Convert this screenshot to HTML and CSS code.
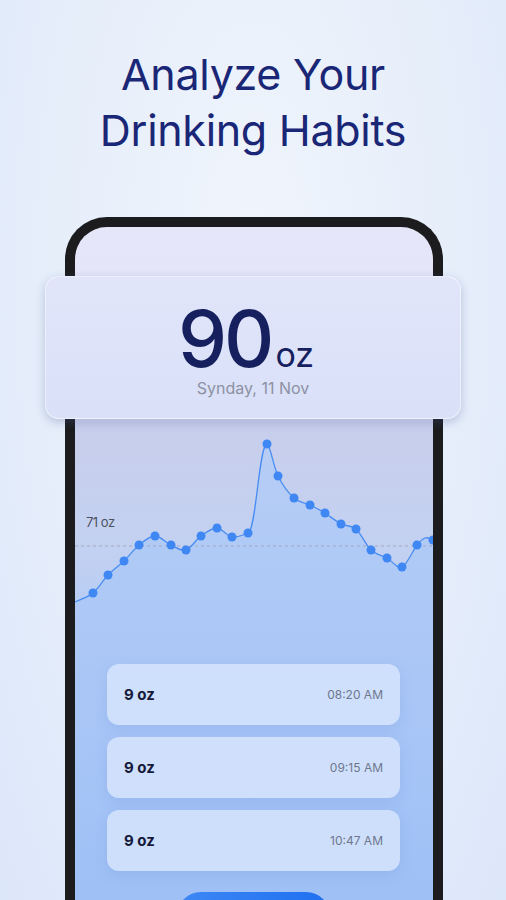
FILE: index.html
```html
<!DOCTYPE html>
<html lang="en">
<head>
    <meta charset="UTF-8">
    <meta name="viewport" content="width=device-width, initial-scale=1.0">
    <title>Analyze Your Drinking Habits</title>
    <link rel="stylesheet" href="styles.css">
</head>
<body>
    <h1 class="title">Analyze Your<br>Drinking Habits</h1>

    <div class="phone">
        <div class="screen-top"></div>

        <div class="total-card">
            <div class="total">
                <span class="total-value">90</span><span class="total-unit">oz</span>
            </div>
            <div class="total-date">Synday, 11 Nov</div>
        </div>

        <svg class="chart" width="358" height="235" viewBox="0 0 358 235">
            <defs>
                <linearGradient id="areaFill" x1="0" y1="0" x2="0" y2="1">
                    <stop offset="0" stop-color="#b7cdf5"/>
                    <stop offset="0.5" stop-color="#b0caf6"/>
                    <stop offset="1" stop-color="#abc7f6"/>
                </linearGradient>
            </defs>
            <path class="area" fill="url(#areaFill)" d="M0,183 C6,180 12.5,178.5 18,174 C23.5,169.5 27.8,161.3 33,156 C38.2,150.7 43.8,147 49,142 C54.2,137 58.8,130.2 64,126 C69.2,121.8 74.7,117 80,117 C85.3,117 90.8,123.7 96,126 C101.2,128.3 106,132.5 111,131 C116,129.5 120.8,120.7 126,117 C131.2,113.3 136.8,108.8 142,109 C147.2,109.2 151.8,117.2 157,118 C162.2,118.8 168,116 173,114 C181,113 184,25 192,25 C195,25 198.5,48 203,57 C207.5,66 213.7,74.2 219,79 C224.3,83.8 229.8,83.5 235,86 C240.2,88.5 244.8,90.8 250,94 C255.2,97.2 260.8,102.3 266,105 C271.2,107.7 276,105.7 281,110 C286,114.3 290.8,126.2 296,131 C301.2,135.8 306.8,136.2 312,139 C317.2,141.8 322,150.2 327,148 C332,145.8 338.2,130.8 342,126 C345.8,121.2 347.3,120 350,119 C352.7,118 356,120 358,120 L358,235 L0,235 Z"/>
            <line class="avg-line" x1="0" y1="127" x2="358" y2="127"/>
            <text class="avg-label" x="11" y="108">71 oz</text>
            <path class="line" d="M0,183 C6,180 12.5,178.5 18,174 C23.5,169.5 27.8,161.3 33,156 C38.2,150.7 43.8,147 49,142 C54.2,137 58.8,130.2 64,126 C69.2,121.8 74.7,117 80,117 C85.3,117 90.8,123.7 96,126 C101.2,128.3 106,132.5 111,131 C116,129.5 120.8,120.7 126,117 C131.2,113.3 136.8,108.8 142,109 C147.2,109.2 151.8,117.2 157,118 C162.2,118.8 168,116 173,114 C181,113 184,25 192,25 C195,25 198.5,48 203,57 C207.5,66 213.7,74.2 219,79 C224.3,83.8 229.8,83.5 235,86 C240.2,88.5 244.8,90.8 250,94 C255.2,97.2 260.8,102.3 266,105 C271.2,107.7 276,105.7 281,110 C286,114.3 290.8,126.2 296,131 C301.2,135.8 306.8,136.2 312,139 C317.2,141.8 322,150.2 327,148 C332,145.8 338.2,130.8 342,126 C345.8,121.2 347.3,120 350,119 C352.7,118 356,120 358,120"/>
            <g class="dots">
                <circle cx="18" cy="174" r="4.5"/>
                <circle cx="33" cy="156" r="4.5"/>
                <circle cx="49" cy="142" r="4.5"/>
                <circle cx="64" cy="126" r="4.5"/>
                <circle cx="80" cy="117" r="4.5"/>
                <circle cx="96" cy="126" r="4.5"/>
                <circle cx="111" cy="131" r="4.5"/>
                <circle cx="126" cy="117" r="4.5"/>
                <circle cx="142" cy="109" r="4.5"/>
                <circle cx="157" cy="118" r="4.5"/>
                <circle cx="173" cy="114" r="4.5"/>
                <circle cx="192" cy="25" r="4.5"/>
                <circle cx="203" cy="57" r="4.5"/>
                <circle cx="219" cy="79" r="4.5"/>
                <circle cx="235" cy="86" r="4.5"/>
                <circle cx="250" cy="94" r="4.5"/>
                <circle cx="266" cy="105" r="4.5"/>
                <circle cx="281" cy="110" r="4.5"/>
                <circle cx="296" cy="131" r="4.5"/>
                <circle cx="312" cy="139" r="4.5"/>
                <circle cx="327" cy="148" r="4.5"/>
                <circle cx="342" cy="126" r="4.5"/>
                <circle cx="358" cy="121" r="4.5"/>
            </g>
        </svg>

        <div class="entries">
            <div class="entry">
                <span class="entry-amount">9 oz</span>
                <span class="entry-time">08:20 AM</span>
            </div>
            <div class="entry">
                <span class="entry-amount">9 oz</span>
                <span class="entry-time">09:15 AM</span>
            </div>
            <div class="entry">
                <span class="entry-amount">9 oz</span>
                <span class="entry-time">10:47 AM</span>
            </div>
        </div>

        <div class="add-btn"></div>
    </div>
</body>
</html>
```

FILE: styles.css
```css
body {
    margin: 0;
    width: 506px;
    height: 900px;
    overflow: hidden;
    font-family: Inter, "Noto Sans", sans-serif;
    background: radial-gradient(ellipse at 50% 30%, #f0f5fc 0%, #e6eefa 55%, #dde7fa 100%);
}
.title {
    margin: 46px 0 0;
    text-align: center;
    font-size: 43px;
    line-height: 56px;
    font-weight: 400;
    color: #1a2676;
    letter-spacing: -0.3px;
}
.phone {
    width: 358px;
    height: 700px;
    margin: 59px 0 0 65px;
    border: 10px solid #1c1c1e;
    border-bottom: none;
    border-radius: 42px 42px 0 0;
    background: linear-gradient(to bottom, #e6e6f9 0, #e1e4f8 190px, #c8ceeb 196px, #c3d1f1 320px, #b3cbf5 400px, #abc7f6 427px, #a5c4f6 560px, #9cbff4 700px);
}
.screen-top {
    height: 49px;
}
.total-card {
    margin: 0 -28px 0 -30px;
    padding: 23px 0 22px;
    border-radius: 14px;
    background: linear-gradient(to bottom, #e1e5fa, #d9e0f8);
    border: 1px solid rgba(255, 255, 255, 0.5);
    box-shadow: 0 3px 10px rgba(70, 90, 150, 0.3);
    text-align: center;
    position: relative;
    height: 96px;
}
.total {
    height: 78px;
    line-height: 78px;
    padding-right: 14px;
    color: #16205e;
}
.total-value {
    font-size: 78px;
    font-weight: 500;
    letter-spacing: -3px;
}
.total-unit {
    font-size: 34px;
    margin-left: 4px;
}
.total-date {
    font-size: 16px;
    line-height: 20px;
    color: #8d91a4;
}
.chart {
    display: block;
}
.chart .line {
    fill: none;
    stroke: #4a8df2;
    stroke-width: 1.3;
}
.chart .avg-line {
    stroke: #a3a9c2;
    stroke-width: 1;
    stroke-dasharray: 3 3;
}
.chart .avg-label {
    font-size: 13px;
    fill: #4d5263;
    letter-spacing: -0.5px;
}
.chart .dots circle {
    fill: #3f87f3;
}
.entries {
    display: flex;
    flex-direction: column;
    gap: 12px;
    padding: 10px 33px 0 32px;
}
.entry {
    height: 61px;
    display: flex;
    align-items: center;
    justify-content: space-between;
    padding: 0 17px;
    border-radius: 12px;
    background: rgba(214, 228, 253, 0.85);
    box-shadow: 0 4px 14px rgba(90, 130, 210, 0.18);
}
.entry-amount {
    font-size: 15px;
    font-weight: 700;
    color: #15193a;
}
.entry-time {
    font-size: 12px;
    color: #6e778c;
}
.add-btn {
    width: 153px;
    height: 48px;
    margin: 21px 0 0 102px;
    border-radius: 24px;
    background: linear-gradient(to right, #3d88f5, #1f6ff0);
}
```
